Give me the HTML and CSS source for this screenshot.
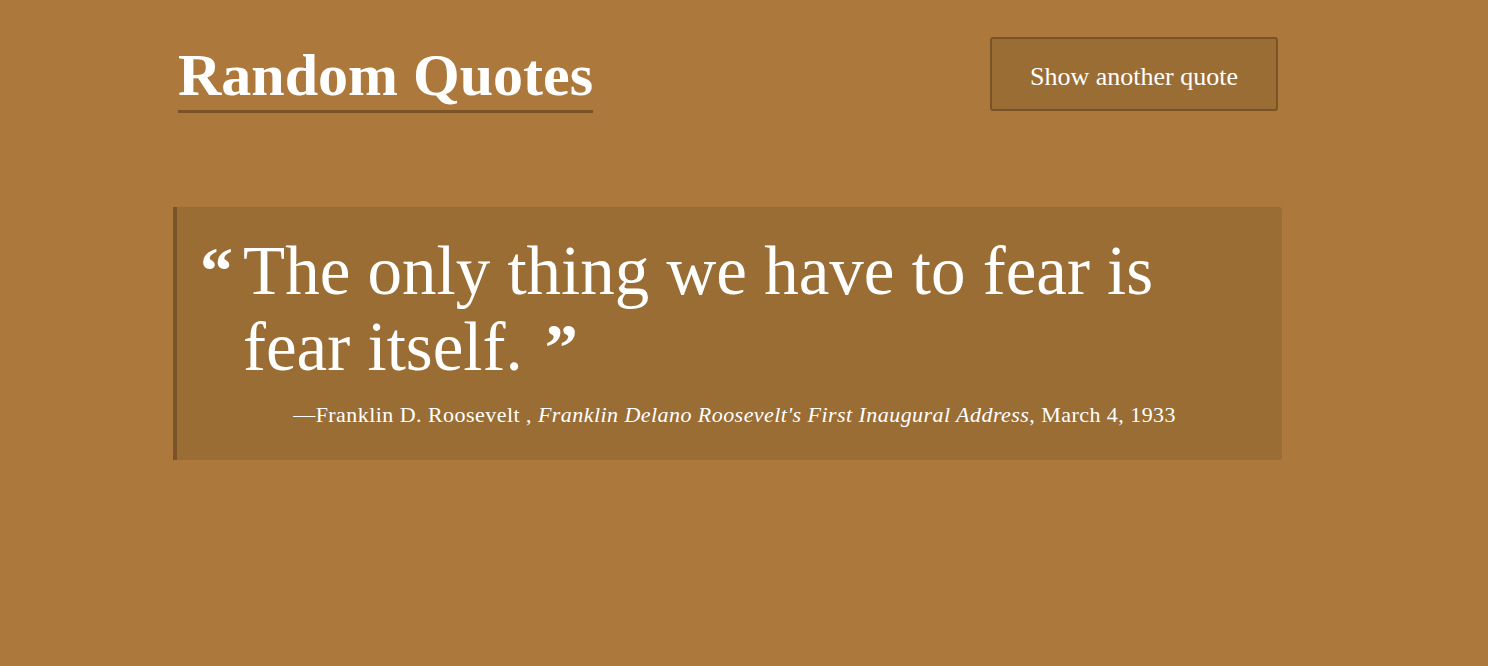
FILE: index.html
```html
<!DOCTYPE html>
<html lang="en">
<head>
<meta charset="utf-8">
<title>Random Quotes</title>
<link rel="stylesheet" href="styles.css">
</head>
<body>
<main class="page">
  <header class="header">
    <h1 class="title">Random Quotes</h1>
    <button class="btn" type="button">Show another quote</button>
  </header>
  <blockquote class="card">
    <p class="quote"><span class="mark open">“</span>The only thing we have to fear is fear itself.</p>
    <footer class="cite">—Franklin D. Roosevelt , <cite>Franklin Delano Roosevelt's First Inaugural Address</cite>, March 4, 1933</footer>
  </blockquote>
</main>
</body>
</html>
```
FILE: styles.css
```css
html, body {
  margin: 0;
  padding: 0;
  background: #ad783c;
  color: #fff;
  font-family: "Liberation Serif", "DejaVu Serif", serif;
  height: 100%;
}

.page {
  width: 1109px;
  margin-left: 173px;
  padding-top: 37px;
}

.header {
  display: flex;
  justify-content: space-between;
  align-items: flex-start;
  padding: 0 4px 0 5px;
}

.title {
  margin: 0;
  font-size: 60px;
  font-weight: 700;
  line-height: 70px;
  border-bottom: 3px solid #7a5428;
  padding-top: 3px;
}

.btn {
  width: 288px;
  height: 74px;
  background: #9a6d35;
  border: 2px solid #7a5428;
  border-radius: 3px;
  color: #fff;
  font-family: inherit;
  font-size: 26px;
  padding: 5px 0 0;
}

.card {
  margin: 94px 0 0;
  background: #9a6d35;
  border-left: 4px solid #7a5428;
  border-radius: 0 3px 3px 0;
  padding: 26px 40px 31px 66px;
}

.quote {
  margin: 0;
  font-size: 69px;
  line-height: 76px;
}

.mark,
.quote::after {
  font-weight: 700;
  font-size: 66px;
}

.open {
  display: inline-block;
  width: 43px;
  margin-left: -43px;
  vertical-align: top;
  line-height: 76px;
}

.quote::after {
  content: "”";
  display: inline-block;
  margin-left: 22px;
  vertical-align: top;
  line-height: 76px;
}

.cite {
  display: block;
  text-align: right;
  padding-right: 66px;
  margin-top: 16px;
  font-size: 22px;
  line-height: 28px;
  letter-spacing: 0.45px;
}

.cite cite {
  font-style: italic;
}
```
